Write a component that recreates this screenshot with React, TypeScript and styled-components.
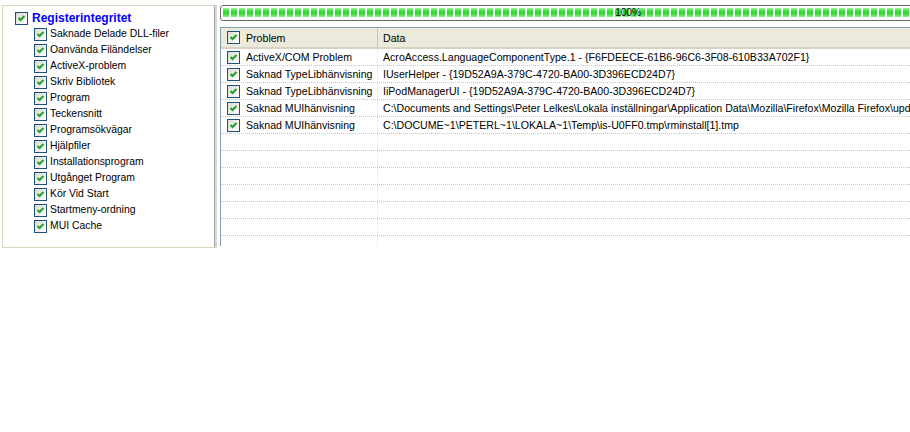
import React from "react";
import styled, { createGlobalStyle } from "styled-components";

const Global = createGlobalStyle`
  html, body {
    margin: 0;
    padding: 0;
    background: #ffffff;
    overflow: hidden;
  }
  body {
    font-family: "Liberation Sans", Arial, sans-serif;
    font-size: 10px;
    color: #000000;
  }
`;

const Page = styled.div`
  display: flex;
  align-items: flex-start;
  width: 1100px;
  height: 432px;
`;

const TreePanel = styled.div`
  margin: 5px 0 0 2px;
  width: 199px;
  height: 237px;
  border: 1px solid #d8d4c0;
  border-right: 1px solid #a4a6b4;
  box-shadow: 2px 0 0 #ddd9c4;
  padding: 4px 0 0 12px;
  box-sizing: content-box;
  flex-shrink: 0;
`;

const TreeRow = styled.div<{ $depth: number }>`
  display: flex;
  align-items: center;
  height: 16px;
  padding-left: ${(p) => p.$depth * 19}px;
  gap: ${(p) => (p.$depth === 0 ? 4 : 3)}px;
  white-space: nowrap;
`;

const TreeLabel = styled.span<{ $root?: boolean }>`
  font-size: ${(p) => (p.$root ? "12px" : "10.4px")};
  font-weight: ${(p) => (p.$root ? 700 : 400)};
  color: ${(p) => (p.$root ? "#0000ff" : "#000000")};
  line-height: 16px;
`;

const Box = styled.span`
  display: inline-flex;
  align-items: center;
  justify-content: center;
  width: 11px;
  height: 11px;
  border: 1px solid #1c5180;
  background: linear-gradient(135deg, #dcdcd7 0%, #f4f4f0 70%, #ffffff 100%);
  flex-shrink: 0;
`;

const Check = () => (
  <Box>
    <svg width="9" height="9" viewBox="0 0 9 9">
      <path d="M1.5 4 L3.5 6 L7.5 2" fill="none" stroke="#21a121" strokeWidth="2" />
    </svg>
  </Box>
);

const RightSide = styled.div`
  margin-left: 5px;
  width: 816px;
  flex-shrink: 0;
  display: flex;
  flex-direction: column;
`;

const Progress = styled.div`
  margin-top: 5px;
  height: 12px;
  border: 1px solid #6a6a6a;
  border-radius: 3px;
  padding: 1px 2px 1px 2px;
  display: flex;
  background: #ffffff;
`;

const ProgressFill = styled.div`
  flex: 1;
  margin-top: 1px;
  height: 9px;
  display: flex;
  align-items: center;
  justify-content: center;
  background-image: repeating-linear-gradient(
      90deg,
      transparent 0px,
      transparent 6px,
      #ffffff 6px,
      #ffffff 8px
    ),
    linear-gradient(#9af59a 0%, #3ddf3d 35%, #2fd82f 65%, #8df08d 100%);
  font-size: 10px;
  line-height: 9px;
  color: #000000;
`;

const ProgressText = styled.span`
  padding: 0 1px;
  line-height: 10px;
`;

const List = styled.div`
  margin-top: 6px;
  height: 218px;
  border-top: 1px solid #7f9db9;
  border-left: 1px solid #7f9db9;
  overflow: hidden;
`;

const HeaderRow = styled.div`
  display: flex;
  height: 19px;
  background: #ebeadb;
  border-bottom: 2px solid #d6d3c2;
`;

const HeaderCell = styled.div<{ $w?: number }>`
  display: flex;
  align-items: center;
  gap: 6px;
  width: ${(p) => (p.$w ? `${p.$w}px` : "auto")};
  flex: ${(p) => (p.$w ? "none" : "1")};
  padding-left: ${(p) => (p.$w ? 6 : 5)}px;
  box-sizing: border-box;
  border-right: ${(p) => (p.$w ? "1px solid #c7c5b2" : "none")};
  white-space: nowrap;
  font-size: 10.6px;
`;

const Row = styled.div`
  display: flex;
  height: 16px;
  border-bottom: 1px dotted #c9c6ae;
`;

const Cell = styled.div<{ $w?: number }>`
  display: flex;
  align-items: center;
  gap: 6px;
  width: ${(p) => (p.$w ? `${p.$w}px` : "auto")};
  flex: ${(p) => (p.$w ? "none" : "1")};
  padding-left: ${(p) => (p.$w ? 6 : 5)}px;
  box-sizing: border-box;
  border-right: ${(p) => (p.$w ? "1px dotted #ece6a8" : "none")};
  white-space: nowrap;
  overflow: hidden;
  font-size: 10.6px;
`;

const categories = [
  "Saknade Delade DLL-filer",
  "Oanvända Filändelser",
  "ActiveX-problem",
  "Skriv Bibliotek",
  "Program",
  "Teckensnitt",
  "Programsökvägar",
  "Hjälpfiler",
  "Installationsprogram",
  "Utgånget Program",
  "Kör Vid Start",
  "Startmeny-ordning",
  "MUI Cache",
];

const problems: [string, string][] = [
  ["ActiveX/COM Problem", "AcroAccess.LanguageComponentType.1 - {F6FDEECE-61B6-96C6-3F08-610B33A702F1}"],
  ["Saknad TypeLibhänvisning", "IUserHelper - {19D52A9A-379C-4720-BA00-3D396ECD24D7}"],
  ["Saknad TypeLibhänvisning", "IiPodManagerUI - {19D52A9A-379C-4720-BA00-3D396ECD24D7}"],
  [
    "Saknad MUIhänvisning",
    "C:\\Documents and Settings\\Peter Lelkes\\Lokala inställningar\\Application Data\\Mozilla\\Firefox\\Mozilla Firefox\\updates\\0\\update.mar",
  ],
  ["Saknad MUIhänvisning", "C:\\DOCUME~1\\PETERL~1\\LOKALA~1\\Temp\\is-U0FF0.tmp\\rminstall[1].tmp"],
];

const EMPTY_ROWS = 8;

export default function App() {
  return (
    <>
      <Global />
      <Page>
        <TreePanel>
          <TreeRow $depth={0}>
            <Check />
            <TreeLabel $root>Registerintegritet</TreeLabel>
          </TreeRow>
          {categories.map((c) => (
            <TreeRow key={c} $depth={1}>
              <Check />
              <TreeLabel>{c}</TreeLabel>
            </TreeRow>
          ))}
        </TreePanel>
        <RightSide>
          <Progress>
            <ProgressFill>
              <ProgressText>100%</ProgressText>
            </ProgressFill>
          </Progress>
          <List>
            <HeaderRow>
              <HeaderCell $w={157}>
                <Check />
                <span>Problem</span>
              </HeaderCell>
              <HeaderCell>Data</HeaderCell>
            </HeaderRow>
            {problems.map(([p, d], i) => (
              <Row key={i}>
                <Cell $w={157}>
                  <Check />
                  <span>{p}</span>
                </Cell>
                <Cell>{d}</Cell>
              </Row>
            ))}
            {Array.from({ length: EMPTY_ROWS }).map((_, i) => (
              <Row key={`e${i}`}>
                <Cell $w={157} />
                <Cell />
              </Row>
            ))}
          </List>
        </RightSide>
      </Page>
    </>
  );
}
